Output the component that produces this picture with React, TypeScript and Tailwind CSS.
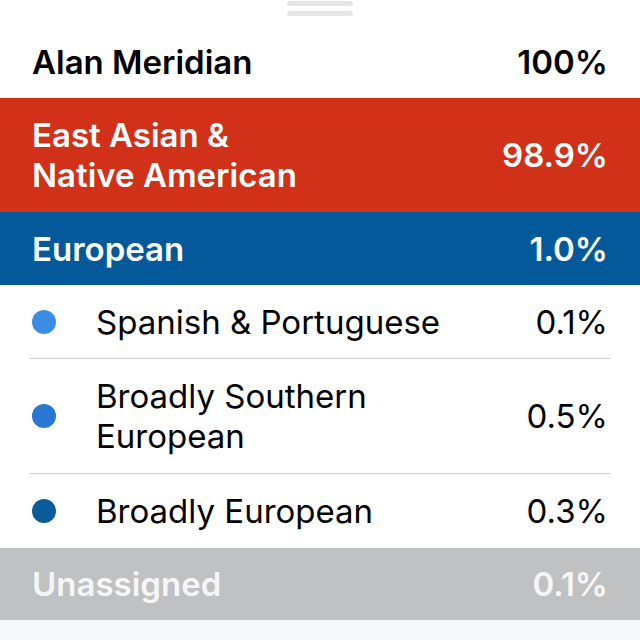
const font = { fontFamily: "Inter, 'Liberation Sans', sans-serif" };

type Sub = { name: string[]; pct: string; dot: string };

const subs: Sub[] = [
  { name: ["Spanish & Portuguese"], pct: "0.1%", dot: "bg-[#3b8de4]" },
  { name: ["Broadly Southern", "European"], pct: "0.5%", dot: "bg-[#2777d3]" },
  { name: ["Broadly European"], pct: "0.3%", dot: "bg-[#0a5b9b]" },
];

export default function App() {
  return (
    <div
      className="w-[640px] h-[640px] overflow-hidden bg-[#f7f8fa] text-[33px] leading-[40px]"
      style={font}
    >
      {/* drag handle + name */}
      <div className="bg-white h-[98px] flex flex-col">
        <div className="flex flex-col items-center gap-[5px] pt-[1px]">
          <div className="w-[66px] h-[5px] rounded-full bg-[#e6e6ea]" />
          <div className="w-[66px] h-[5px] rounded-full bg-[#e6e6ea]" />
        </div>
        <div className="flex-1 flex items-center justify-between pl-[32px] pr-[32px] pt-[9px] font-semibold text-black">
          <span>Alan Meridian</span>
          <span>100%</span>
        </div>
      </div>

      {/* main groups */}
      <div className="h-[114px] bg-[#d03118] flex items-center justify-between pl-[32px] pr-[32px] font-semibold text-white">
        <span>
          East Asian &amp;
          <br />
          Native American
        </span>
        <span>98.9%</span>
      </div>
      <div className="h-[73px] bg-[#03599a] flex items-center justify-between pl-[32px] pr-[32px] font-semibold text-white">
        <span>European</span>
        <span>1.0%</span>
      </div>

      {/* sub regions */}
      <div className="bg-white px-[30px]">
        {subs.map((s, i) => (
          <div
            key={s.pct + i}
            className={`flex items-center ${s.name.length > 1 ? "h-[115px]" : "h-[74px]"} ${
              i < subs.length - 1 ? "border-b border-[#cfcfd2]" : ""
            }`}
          >
            <div className={`w-[24px] h-[24px] rounded-full ml-[2px] ${s.dot}`} />
            <span className="ml-[40px] flex-1 text-black">
              {s.name.map((n) => (
                <span key={n} className="block">
                  {n}
                </span>
              ))}
            </span>
            <span className="mr-[2px] text-black">{s.pct}</span>
          </div>
        ))}
      </div>

      <div className="h-[72px] bg-[#c0c1c3] flex items-center justify-between pl-[32px] pr-[32px] font-semibold text-[#f6f6f7]">
        <span>Unassigned</span>
        <span>0.1%</span>
      </div>
    </div>
  );
}
